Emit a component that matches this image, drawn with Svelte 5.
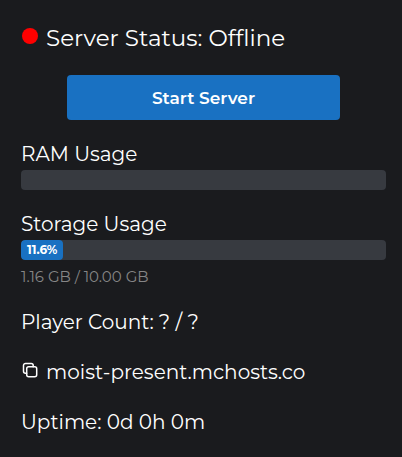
<script>
  let {
    online = false,
    ram = 0,
    storageUsed = 1.16,
    storageMax = 10,
    players = "?",
    maxPlayers = "?",
    address = "moist-present.mchosts.co",
    uptime = "0d 0h 0m",
  } = $props();

  let storagePct = $derived((storageUsed / storageMax) * 100);

  function copyAddress() {
    navigator.clipboard?.writeText(address);
  }
</script>

<main class="panel">
  <h1 class="status">
    <span class="dot" class:online></span>
    <span>Server Status: {online ? "Online" : "Offline"}</span>
  </h1>

  <button class="start" type="button">{online ? "Stop Server" : "Start Server"}</button>

  <section class="usage">
    <h2 id="ram-label">RAM Usage</h2>
    <div class="track" role="progressbar" aria-labelledby="ram-label" aria-valuenow={ram} aria-valuemin="0" aria-valuemax="100">
      {#if ram > 0}
        <div class="fill" style="width: {ram}%">{ram.toFixed(1)}%</div>
      {/if}
    </div>
  </section>

  <section class="usage storage">
    <h2 id="storage-label">Storage Usage</h2>
    <div class="track" role="progressbar" aria-labelledby="storage-label" aria-valuenow={storagePct} aria-valuemin="0" aria-valuemax="100">
      <div class="fill" style="width: {storagePct}%">{storagePct.toFixed(1)}%</div>
    </div>
    <div class="amount">{storageUsed.toFixed(2)} GB / {storageMax.toFixed(2)} GB</div>
  </section>

  <div class="details">
    <div class="row">Player Count: {players} / {maxPlayers}</div>
    <div class="row address">
      <button class="copy" type="button" aria-label="Copy address" onclick={copyAddress}>
        <svg viewBox="0 0 16 16" width="16" height="16" fill="none" stroke="currentColor" stroke-width="1.5" stroke-linejoin="round" stroke-linecap="round">
          <rect x="4.7" y="4.7" width="10" height="10" rx="2" />
          <path d="M4.7 11.2H3.5a2 2 0 0 1-2-2V3.5a2 2 0 0 1 2-2h5.7a2 2 0 0 1 2 2v1.2" />
        </svg>
      </button>
      <span>{address}</span>
    </div>
    <div class="row">Uptime: {uptime}</div>
  </div>
</main>

<style>
  :global(body) { margin: 0; background: #1a1b1e; }

  .panel {
    padding: 22px 16px 20px 21px;
    font-family: Montserrat, Inter, sans-serif;
    font-size: 20px;
    line-height: 32px;
    color: #fff;
  }

  h1, h2 { margin: 0; font-weight: 400; }

  .status, .address { display: flex; gap: 8px; padding-left: 1px; }
  .status { font-size: 23px; }
  .dot {
    width: 16px;
    height: 16px;
    margin-top: 6px;
    border-radius: 50%;
    background: #f00;
    flex-shrink: 0;
  }
  .dot.online { background: #0c0; }

  .start {
    display: block;
    width: 75%;
    height: 45px;
    margin: 21px auto 18px;
    border: 0;
    border-radius: 4px;
    background: #1971c2;
    color: #fff;
    font: 600 17px Montserrat, Inter, sans-serif;
    cursor: pointer;
  }

  .usage { margin-bottom: 18px; }
  .usage h2 { font-size: 20px; line-height: 32px; }
  .track {
    height: 20px;
    border-radius: 4px;
    background: #373a40;
    overflow: hidden;
  }
  .fill {
    display: flex;
    align-items: center;
    justify-content: center;
    height: 100%;
    border-radius: 4px;
    background: #1971c2;
    font-size: 12px;
    font-weight: 700;
  }
  .amount { font-size: 15px; line-height: 34px; color: #868686; }

  .storage { margin-bottom: 12px; }
  .details { display: flex; flex-direction: column; gap: 18px; }
  .copy {
    display: flex;
    align-self: flex-start;
    margin-top: 6px;
    padding: 0;
    border: 0;
    background: none;
    color: #fff;
    cursor: pointer;
  }
</style>
